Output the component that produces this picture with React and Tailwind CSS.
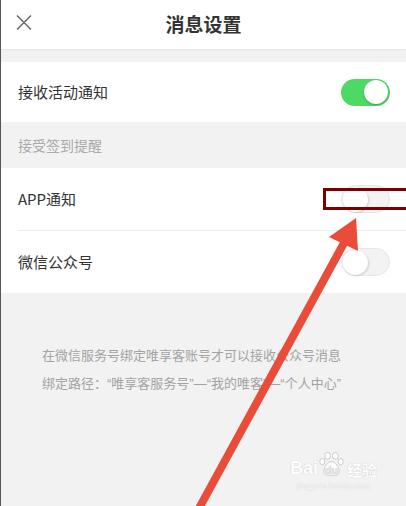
const font = { fontFamily: '"Noto Sans CJK SC", "Noto Sans", sans-serif' };

function Toggle({ on }) {
  if (on) {
    return (
      <div className="flex h-[27px] w-[49px] items-center justify-end rounded-full bg-[#4cd964] pr-[2px]">
        <div className="h-[24px] w-[24px] rounded-full bg-white shadow-[0_1px_2px_rgba(0,0,0,0.25)]" />
      </div>
    );
  }
  return (
    <div className="flex h-[28px] w-[49px] items-center rounded-full border border-[#e6e6e6] bg-[#f3f3f3] pl-[1px]">
      <div className="h-[25px] w-[25px] rounded-full bg-white shadow-[1px_1px_2px_rgba(0,0,0,0.15)]" />
    </div>
  );
}

function Row({ label, on }) {
  return (
    <div className="flex h-[62px] items-center justify-between pr-[16px]">
      <span className="text-[15px] text-[#333]">{label}</span>
      <Toggle on={on} />
    </div>
  );
}

export default function App() {
  return (
    <div
      className="relative h-[506px] w-[406px] overflow-hidden border-l border-[#555] bg-[#f2f2f2]"
      style={font}
    >
      <header className="relative flex h-[49px] items-center justify-center bg-white shadow-[0_1px_2px_rgba(0,0,0,0.06)]">
        <svg className="absolute left-[14px] top-[15px]" width="18" height="15" viewBox="0 0 18 15">
          <path d="M2 0.5 L16 14.5 M16 0.5 L2 14.5" stroke="#6b6b6b" strokeWidth="1.5" fill="none" />
        </svg>
        <h1 className="text-[19px] font-bold text-[#333]">消息设置</h1>
      </header>

      <section className="mt-[13px] bg-white pl-[17px]">
        <div className="flex h-[60px] items-center justify-between pr-[16px]">
          <span className="text-[15px] text-[#333]">接收活动通知</span>
          <Toggle on />
        </div>
      </section>

      <div className="flex h-[46px] items-center pl-[17px] text-[14px] text-[#aaa]">接受签到提醒</div>

      <section className="bg-white pl-[17px]">
        <Row label="APP通知" />
        <div className="h-px bg-[#ececec]" />
        <Row label="微信公众号" />
      </section>

      <div
        className="pl-[41px] pt-[49px] text-[13px] leading-[28px] text-[#a3a3a3]"
        style={{ fontFamily: '"Liberation Sans", "Noto Sans CJK SC", sans-serif' }}
      >
        <p>在微信服务号绑定唯享客账号才可以接收公众号消息</p>
        <p>绑定路径：“唯享客服务号”—“我的唯客”—“个人中心”</p>
      </div>

      {/* baidu watermark */}
      <div className="absolute left-[289px] top-[451px] flex flex-col items-center text-white [text-shadow:0_0_1px_#b5b5b5]">
        <div className="flex items-end leading-none">
          <span className="mb-[1px] text-[18px] font-bold" style={{ fontFamily: '"Liberation Sans", sans-serif' }}>Bai</span>
          <svg width="27" height="27" viewBox="0 0 26 28">
            <g fill="white" stroke="#c8c8c8" strokeWidth="1">
              <ellipse cx="9" cy="5" rx="3" ry="3.5" />
              <ellipse cx="17" cy="5" rx="3" ry="3.5" />
              <ellipse cx="3.5" cy="11" rx="2.7" ry="3.2" />
              <ellipse cx="22.5" cy="11" rx="2.7" ry="3.2" />
              <path d="M13 11 C9 11 5 17 5 21 C5 25 9 26 13 25 C17 26 21 25 21 21 C21 17 17 11 13 11 Z" />
            </g>
            <text x="13" y="24" textAnchor="middle" fontSize="11" fontWeight="bold" fill="#e4e4e4" fontFamily="Liberation Sans">du</text>
          </svg>
          <span className="mb-[1px] ml-[2px] text-[15px] font-bold">经验</span>
        </div>
        <span className="mt-[3px] text-[10px] leading-none" style={{ fontFamily: '"Liberation Serif", serif' }}>jingyan.baidu.com</span>
      </div>

      {/* annotation: red box */}
      <div className="absolute left-[322px] top-[188px] h-[22px] w-[90px] border-[3px] border-[#7d0000]" />

      {/* annotation: arrow */}
      <svg className="absolute left-0 top-0" width="406" height="506" viewBox="0 0 406 506">
        <line x1="343" y1="243" x2="196" y2="512" stroke="#ea4c3a" strokeWidth="8" />
        <polygon points="355,218 328,237 357,251" fill="#ea4c3a" />
      </svg>
    </div>
  );
}
